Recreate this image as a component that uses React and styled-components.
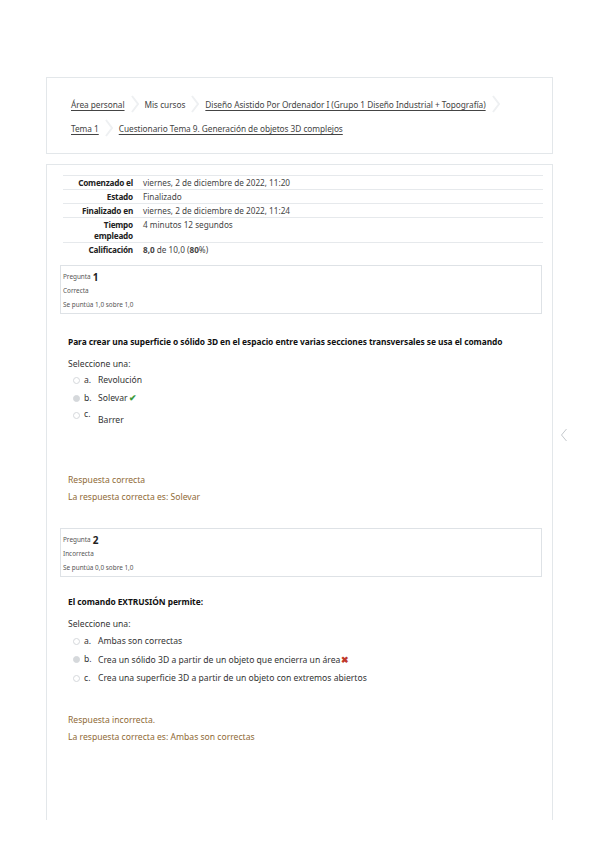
import React from "react";
import styled, { createGlobalStyle } from "styled-components";

const Global = createGlobalStyle`
  html, body { margin: 0; padding: 0; background: #fff; }
  body { font-family: "Noto Sans", "Liberation Sans", sans-serif; color: #333; }
`;

const Page = styled.div`
  position: relative;
  width: 599px;
  min-height: 848px;
  padding: 77px 0 0 46px;
  box-sizing: border-box;
`;

const BreadcrumbCard = styled.nav`
  width: 507px;
  height: 77px;
  box-sizing: border-box;
  border: 1px solid #e3e7ea;
  padding: 14px 20px 0 24px;
  display: flex;
  flex-wrap: wrap;
  align-content: flex-start;
  font-size: 8.3px;
  letter-spacing: -0.05px;
`;

const CrumbItem = styled.span`
  display: inline-flex;
  align-items: center;
  height: 24px;
  white-space: nowrap;
`;

const CrumbText = styled.span`
  color: #444;
  text-decoration: ${(p) => (p.$link ? "underline" : "none")};
  text-underline-offset: 1.5px;
`;

const Sep = styled.svg`
  width: 10px;
  height: 18px;
  margin: 0 5px 0 5px;
  flex: none;
`;

const Separator = () => (
  <Sep viewBox="0 0 10 18">
    <path d="M2 1 L8 9 L2 17" fill="none" stroke="#eef0f2" strokeWidth="2" />
  </Sep>
);

const Crumb = ({ link, last, children }) => (
  <CrumbItem>
    <CrumbText $link={link}>{children}</CrumbText>
    {!last && <Separator />}
  </CrumbItem>
);

const MainCard = styled.main`
  width: 507px;
  height: 656px;
  margin-top: 10px;
  box-sizing: border-box;
  border: 1px solid #e3e7ea;
  border-bottom: none;
  padding: 10px 10px 0 13px;
`;

const Summary = styled.table`
  width: 480px;
  margin-left: 3px;
  border-collapse: collapse;
  table-layout: fixed;
  font-size: 8.2px;
  line-height: 11px;
`;

const LabelCol = styled.col`
  width: 77px;
`;

const Row = styled.tr`
  border-top: 1px solid #e6e9ec;
`;

const Th = styled.th`
  text-align: right;
  font-weight: 700;
  color: #222;
  padding: 1px 7px 1px 0;
  vertical-align: top;
  font-size: 8.2px;
  letter-spacing: -0.2px;
  white-space: normal;
`;

const Td = styled.td`
  padding: 1px 0 1px 3px;
  vertical-align: top;
  color: #444;
`;

const InfoBox = styled.div`
  width: 482px;
  box-sizing: border-box;
  margin-top: ${(p) => p.$mt}px;
  border: 1px solid #dee2e6;
  padding: 2px 2px 3px 2px;
  font-size: 6.4px;
  color: #555;
  display: flex;
  flex-direction: column;
`;

const InfoLine = styled.div`
  height: 14px;
  display: flex;
  align-items: flex-end;
  line-height: 10px;
`;

const QNum = styled.span`
  font-size: 10px;
  font-weight: 700;
  color: #222;
  margin-left: 2px;
  line-height: 10px;
`;

const Content = styled.div`
  padding-left: 8px;
`;

const QText = styled.p`
  margin: ${(p) => p.$mt}px 0 0 0;
  font-size: 8.4px;
  line-height: 11px;
  font-weight: 700;
  color: #111;
  letter-spacing: -0.05px;
`;

const Prompt = styled.div`
  margin-top: 12px;
  font-size: 8.6px;
  line-height: 11px;
  color: #333;
`;

const Options = styled.div`
  margin-top: 2px;
  padding-left: 5px;
  display: flex;
  flex-direction: column;
`;

const Option = styled.div`
  display: flex;
  align-items: ${(p) => (p.$drop ? "flex-start" : "center")};
  height: ${(p) => p.$h || 17.5}px;
  font-size: 8.6px;
  line-height: 11px;
  color: #333;
`;

const Radio = styled.span`
  width: 7px;
  height: 7px;
  border-radius: 50%;
  box-sizing: border-box;
  border: 1px solid #d5d8db;
  background: ${(p) => (p.$checked ? "#d5d8db" : "#fff")};
  margin-right: 4px;
  flex: none;
  margin-top: ${(p) => (p.$drop ? "5px" : "0")};
`;

const Letter = styled.span`
  width: 14px;
  flex: none;
  margin-top: ${(p) => (p.$drop ? "2px" : "0")};
`;

const OptText = styled.span`
  margin-top: ${(p) => (p.$drop ? "8px" : "0")};
  white-space: nowrap;
`;

const Mark = styled.span`
  color: ${(p) => p.$c};
  font-size: 9px;
  margin-left: 1px;
  font-weight: 700;
`;

const Feedback = styled.div`
  margin-top: ${(p) => p.$mt}px;
  font-size: 8.6px;
  color: #8f6a36;
  display: flex;
  flex-direction: column;
  gap: 6px;
  line-height: 11px;
`;

const DrawerToggle = styled.svg`
  position: absolute;
  left: 560px;
  top: 428px;
  width: 8px;
  height: 14px;
`;

const summary = [
  ["Comenzado el", "viernes, 2 de diciembre de 2022, 11:20"],
  ["Estado", "Finalizado"],
  ["Finalizado en", "viernes, 2 de diciembre de 2022, 11:24"],
  ["Tiempo empleado", "4 minutos 12 segundos"],
];

export default function App() {
  return (
    <>
      <Global />
      <Page>
        <BreadcrumbCard>
          <Crumb link>Área personal</Crumb>
          <Crumb>Mis cursos</Crumb>
          <Crumb link>Diseño Asistido Por Ordenador I (Grupo 1 Diseño Industrial + Topografía)</Crumb>
          <Crumb link>Tema 1</Crumb>
          <Crumb link last>
            Cuestionario Tema 9. Generación de objetos 3D complejos
          </Crumb>
        </BreadcrumbCard>

        <MainCard>
          <Summary>
            <colgroup>
              <LabelCol />
              <col />
            </colgroup>
            <tbody>
              {summary.map(([k, v]) => (
                <Row key={k}>
                  <Th>{k}</Th>
                  <Td>{v}</Td>
                </Row>
              ))}
              <Row>
                <Th>Calificación</Th>
                <Td>
                  <b>8,0</b> de 10,0 (<b>80</b>%)
                </Td>
              </Row>
            </tbody>
          </Summary>

          <InfoBox $mt={9}>
            <InfoLine>
              Pregunta<QNum>1</QNum>
            </InfoLine>
            <InfoLine>Correcta</InfoLine>
            <InfoLine>Se puntúa 1,0 sobre 1,0</InfoLine>
          </InfoBox>

          <Content>
            <QText $mt={22}>
              Para crear una superficie o sólido 3D en el espacio entre varias secciones transversales se usa el comando
            </QText>
            <Prompt>Seleccione una:</Prompt>
            <Options>
              <Option>
                <Radio />
                <Letter>a.</Letter>
                <OptText>Revolución</OptText>
              </Option>
              <Option>
                <Radio $checked />
                <Letter>b.</Letter>
                <OptText>
                  Solevar<Mark $c="#3a9a3a">✔</Mark>
                </OptText>
              </Option>
              <Option $drop $h={22}>
                <Radio $drop />
                <Letter $drop>c.</Letter>
                <OptText $drop>Barrer</OptText>
              </Option>
            </Options>
            <Feedback $mt={46}>
              <span>Respuesta correcta</span>
              <span>La respuesta correcta es: Solevar</span>
            </Feedback>
          </Content>

          <InfoBox $mt={25}>
            <InfoLine>
              Pregunta<QNum>2</QNum>
            </InfoLine>
            <InfoLine>Incorrecta</InfoLine>
            <InfoLine>Se puntúa 0,0 sobre 1,0</InfoLine>
          </InfoBox>

          <Content>
            <QText $mt={19}>El comando EXTRUSIÓN permite:</QText>
            <Prompt>Seleccione una:</Prompt>
            <Options>
              <Option $h={18.5}>
                <Radio />
                <Letter>a.</Letter>
                <OptText>Ambas son correctas</OptText>
              </Option>
              <Option $h={18.5}>
                <Radio $checked />
                <Letter>b.</Letter>
                <OptText>
                  Crea un sólido 3D a partir de un objeto que encierra un área<Mark $c="#c0392b">✖</Mark>
                </OptText>
              </Option>
              <Option $h={18.5}>
                <Radio />
                <Letter>c.</Letter>
                <OptText>Crea una superficie 3D a partir de un objeto con extremos abiertos</OptText>
              </Option>
            </Options>
            <Feedback $mt={27}>
              <span>Respuesta incorrecta.</span>
              <span>La respuesta correcta es: Ambas son correctas</span>
            </Feedback>
          </Content>
        </MainCard>

        <DrawerToggle viewBox="0 0 8 14">
          <path d="M6.5 1 L1.5 7 L6.5 13" fill="none" stroke="#c4c8cc" strokeWidth="1" />
        </DrawerToggle>
      </Page>
    </>
  );
}
